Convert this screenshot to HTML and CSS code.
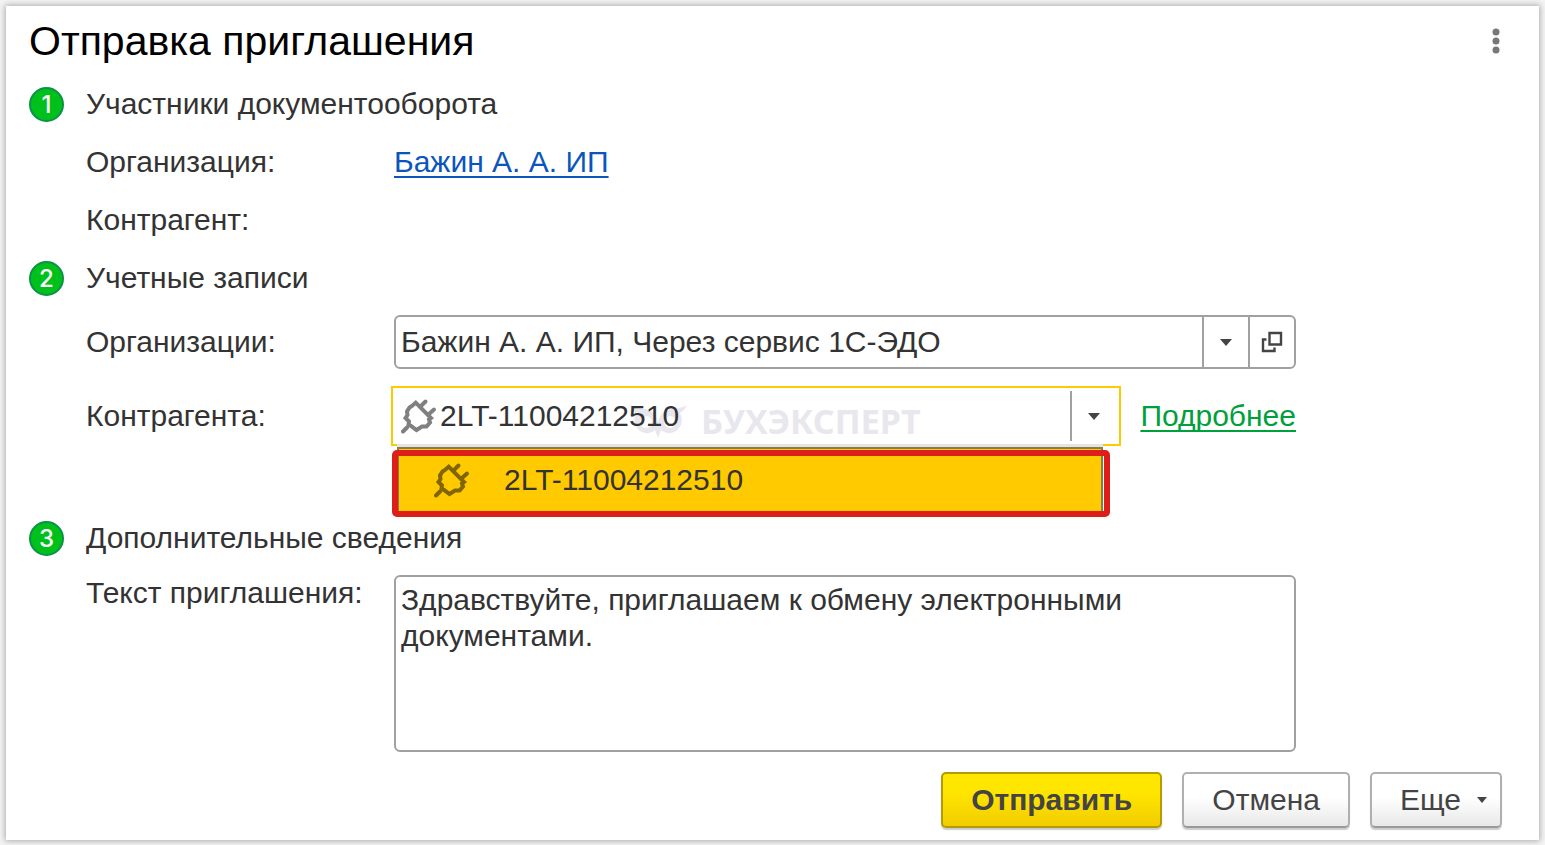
FILE: index.html
```html
<!DOCTYPE html>
<html lang="ru">

<head>
    <meta charset="UTF-8">
    <meta name="viewport" content="width=device-width, initial-scale=1.0">
    <title>Отправка приглашения</title>
    <link rel="stylesheet" href="styles.css">
</head>

<body>
    <!-- Общие иконки -->
    <svg class="sprite" aria-hidden="true">
        <symbol id="plug" viewBox="0 0 36 36">
            <path d="M2 33.5 L6 29.5" />
            <path d="M14.7 4.7 L30 20 L28 21.5 L29 24.5 L25.5 28.5 L21 28.5 L15.5 32 L10 28 L7.5 26.5 L8 23.5 L4.5 20 L6.5 17 L6 13.5 L8.5 9.5 L11 8 Z" />
            <path d="M20 8 L24.5 3.5 M28 16 L33 11.5" />
        </symbol>
        <symbol id="arrow" viewBox="0 0 12 7">
            <path d="M0 0 H12 L6 7 Z" />
        </symbol>
    </svg>

    <main class="window">
        <header class="title-bar">
            <h1>Отправка приглашения</h1>
            <button class="menu-btn" type="button" aria-label="Меню">
                <svg width="8" height="26" viewBox="0 0 8 26">
                    <circle cx="4" cy="4" r="3.5" />
                    <circle cx="4" cy="13" r="3.5" />
                    <circle cx="4" cy="22" r="3.5" />
                </svg>
            </button>
        </header>

        <form>
            <!-- Участники -->
            <section>
                <h2><span class="step">1</span>Участники документооборота</h2>
                <div class="row">
                    <span>Организация:</span>
                    <a class="link-blue" href="#">Бажин А. А. ИП</a>
                </div>
                <div class="row">
                    <span>Контрагент:</span>
                </div>
            </section>

            <!-- Учетные записи -->
            <section class="accounts">
                <h2><span class="step">2</span>Учетные записи</h2>
                <div class="row field-row">
                    <label for="org-account">Организации:</label>
                    <div class="combo">
                        <select id="org-account">
                            <option>Бажин А. А. ИП, Через сервис 1С-ЭДО</option>
                        </select>
                        <svg class="arrow"><use href="#arrow" /></svg>
                        <button class="open-btn" type="button" aria-label="Открыть">
                            <svg width="22" height="22" viewBox="0 0 22 22">
                                <path d="M8.5 2 H20 V13.5 H8.5 Z M5.5 8.5 H2 V20 H13.5 V16.5" />
                            </svg>
                        </button>
                    </div>
                </div>
                <div class="row field-row">
                    <label for="partner-account">Контрагента:</label>
                    <div class="partner">
                        <div class="combo active">
                            <div class="watermark" aria-hidden="true">
                                <svg width="58" height="34" viewBox="0 0 58 34">
                                    <path d="M0 1 Q7 5 16 5 Q26 6 29 18 Q32 6 42 5 Q51 5 58 1 Q55 7 51 9 Q56 20 47 27 Q38 32 32 26 L29 34 L26 26 Q20 32 11 27 Q2 20 7 9 Q3 7 0 1 Z" />
                                    <circle cx="17" cy="18" r="6" />
                                    <circle cx="41" cy="18" r="6" />
                                </svg>
                                <span>БУХЭКСПЕРТ</span>
                            </div>
                            <svg class="plug"><use href="#plug" /></svg>
                            <select id="partner-account">
                                <option>2LT-11004212510</option>
                            </select>
                            <svg class="arrow"><use href="#arrow" /></svg>
                            <ul class="popup" role="listbox" aria-label="Контрагента">
                                <li role="option" aria-selected="true">
                                    <svg class="plug"><use href="#plug" /></svg>2LT-11004212510
                                </li>
                            </ul>
                        </div>
                        <a class="link-green" href="#">Подробнее</a>
                    </div>
                </div>
            </section>

            <!-- Дополнительные сведения -->
            <section class="details">
                <h2><span class="step">3</span>Дополнительные сведения</h2>
                <div class="row text-row">
                    <label for="message">Текст приглашения:</label>
                    <textarea id="message">Здравствуйте, приглашаем к обмену электронными документами.</textarea>
                </div>
            </section>

            <footer>
                <button class="btn primary" type="submit">Отправить</button>
                <button class="btn" type="button">Отмена</button>
                <button class="btn more" type="button">Еще <svg class="arrow"><use href="#arrow" /></svg></button>
            </footer>
        </form>
    </main>
</body>

</html>
```

FILE: styles.css
```css
* {
    box-sizing: border-box;
}

body {
    margin: 0;
    padding: 6px;
    background: #f4f4f4;
    font-family: "Liberation Sans", Arial, sans-serif;
    font-size: 30px;
    line-height: 36px;
    color: #333;
}

button,
select,
textarea {
    font: inherit;
    color: inherit;
    margin: 0;
}

.sprite {
    position: absolute;
    width: 0;
    height: 0;
}

.window {
    padding: 0 37px 12px 23px;
    background: #fff;
    box-shadow: 0 0 6px 1px #aaa;
}

.title-bar {
    display: flex;
    align-items: center;
    justify-content: space-between;
    height: 69px;
    padding-right: 2px;
}

h1 {
    margin: 0;
    font-size: 41px;
    font-weight: normal;
    color: #000;
}

.menu-btn {
    display: flex;
    padding: 0;
    border: none;
    background: none;
    cursor: pointer;
    fill: #777;
}

section {
    margin-right: 206px;
}

h2 {
    display: flex;
    align-items: center;
    gap: 22px;
    height: 58px;
    margin: 0;
    font-size: 30px;
    font-weight: normal;
}

/* Номер шага */
.step {
    display: flex;
    align-items: center;
    justify-content: center;
    width: 35px;
    height: 35px;
    padding-top: 2px;
    border: 2px solid #0a9347;
    border-radius: 50%;
    background: #00c11b;
    color: #fff;
    font-family: Inter, sans-serif;
    font-size: 24px;
    font-weight: 500;
}

.row {
    display: grid;
    grid-template-columns: 308px 1fr;
    align-items: center;
    min-height: 58px;
    padding-left: 57px;
}

.row a {
    justify-self: start;
    text-decoration-thickness: 2px;
    text-underline-offset: 4px;
    text-decoration-skip-ink: none;
}

.row .link-blue {
    color: #0b55bd;
}

.row .link-green {
    color: #00a03c;
}

/* Поля с выбором */
.field-row {
    min-height: 0;
    margin-top: 8px;
}

.field-row + .field-row {
    margin-top: 17px;
}

.combo {
    display: flex;
    align-items: center;
    position: relative;
    height: 54px;
    border: 2px solid #a0a0a0;
    border-radius: 6px;
}

.combo select {
    flex: 1;
    min-width: 0;
    height: 100%;
    padding: 0 0 0 5px;
    border: none;
    outline: none;
    background: none;
    appearance: none;
}

.arrow {
    width: 12px;
    height: 7px;
    fill: #444;
}

.combo > .arrow {
    box-sizing: content-box;
    padding: 22px 16px 21px;
    border-left: 2px solid #a0a0a0;
}

.open-btn {
    display: flex;
    align-items: center;
    justify-content: center;
    width: 46px;
    height: 100%;
    padding: 0;
    border: none;
    border-left: 2px solid #a0a0a0;
    background: none;
    cursor: pointer;
}

.open-btn path {
    fill: none;
    stroke: #444;
    stroke-width: 2.4;
}

.partner {
    display: flex;
    align-items: center;
    gap: 19px;
    margin-left: -3px;
}

.combo.active {
    flex: 1;
    height: 60px;
    padding: 0 3px 0 8px;
    border-color: #ffca00;
    border-radius: 0;
}

.plug {
    flex: none;
    width: 36px;
    height: 36px;
    fill: none;
    stroke: #808080;
    stroke-width: 4;
    stroke-linecap: round;
}

.combo.active select {
    position: relative;
    padding-left: 3px;
}

.watermark {
    display: flex;
    align-items: center;
    gap: 14px;
    position: absolute;
    top: 15px;
    left: 236px;
    color: #e8e7ed;
    font-family: "Noto Sans", sans-serif;
    font-size: 34px;
    font-weight: bold;
}

.watermark path {
    fill: #e8e7ed;
}

.watermark circle {
    fill: #fff;
}

/* Выпадающий список */
.popup {
    position: absolute;
    top: 56px;
    left: 4px;
    right: 16px;
    margin: 0;
    padding: 0;
    border-top: 3px solid #e4e4e4;
    background: #ffca00;
    list-style: none;
}

.popup li {
    display: flex;
    align-items: center;
    gap: 34px;
    height: 66px;
    padding-left: 35px;
    border: 2px solid #8a7a50;
}

.popup .plug {
    stroke: #806500;
}

.popup::after {
    content: "";
    position: absolute;
    top: 3px;
    bottom: -4px;
    left: -5px;
    right: -7px;
    border: 6px solid #dc1f18;
    border-radius: 5px;
}

.details {
    margin-top: 63px;
}

.text-row {
    align-items: start;
    margin-top: 8px;
}

textarea {
    display: block;
    width: 100%;
    height: 177px;
    padding: 5px;
    border: 2px solid #a0a0a0;
    border-radius: 6px;
    outline: none;
    resize: none;
}

/* Кнопки */
footer {
    display: flex;
    justify-content: flex-end;
    gap: 20px;
    margin-top: 20px;
}

.btn {
    height: 56px;
    padding: 0 28px;
    border: 2px solid #b0b0b0;
    border-bottom-color: #999;
    border-radius: 5px;
    background: linear-gradient(#fff 45%, #e8e8e8);
    box-shadow: 0 2px 1px #ccc;
    color: #444;
    cursor: pointer;
}

.btn.primary {
    border-color: #b39b00;
    background: linear-gradient(#ffe600 35%, #f2cc00);
    font-weight: bold;
}

.btn.more {
    display: flex;
    align-items: center;
    gap: 16px;
    padding-right: 13px;
}

.btn .arrow {
    width: 10px;
    height: 6px;
}
```
